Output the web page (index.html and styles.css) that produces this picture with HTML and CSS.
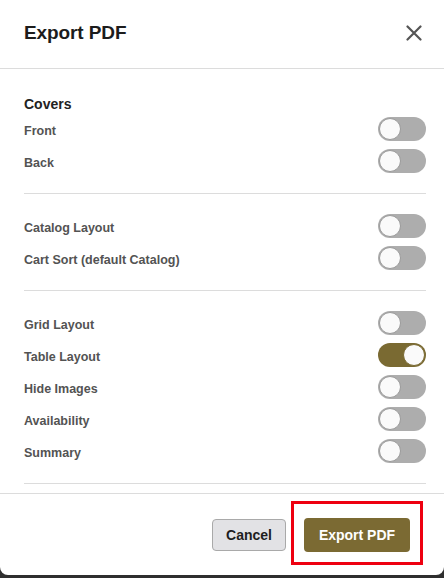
FILE: index.html
```html
<!DOCTYPE html>
<html lang="en">
<head>
<meta charset="utf-8">
<title>Export PDF</title>
<link rel="stylesheet" href="styles.css">
</head>
<body>
<div class="modal">
  <header class="modal-header">
    <h1 class="modal-title">Export PDF</h1>
    <button class="close-btn" aria-label="Close">
      <svg width="16" height="16" viewBox="0 0 16 16"><path d="M1.5 1.5 L14.5 14.5 M14.5 1.5 L1.5 14.5" stroke="#555" stroke-width="2.2" stroke-linecap="round" fill="none"/></svg>
    </button>
  </header>
  <div class="modal-body">
    <section class="section">
      <h2 class="section-title">Covers</h2>
      <div class="row"><span class="label">Front</span><span class="toggle"><span class="knob"></span></span></div>
      <div class="row"><span class="label">Back</span><span class="toggle"><span class="knob"></span></span></div>
    </section>
    <section class="section">
      <div class="row"><span class="label">Catalog Layout</span><span class="toggle"><span class="knob"></span></span></div>
      <div class="row"><span class="label">Cart Sort (default Catalog)</span><span class="toggle"><span class="knob"></span></span></div>
    </section>
    <section class="section">
      <div class="row"><span class="label">Grid Layout</span><span class="toggle"><span class="knob"></span></span></div>
      <div class="row"><span class="label">Table Layout</span><span class="toggle on"><span class="knob"></span></span></div>
      <div class="row"><span class="label">Hide Images</span><span class="toggle"><span class="knob"></span></span></div>
      <div class="row"><span class="label">Availability</span><span class="toggle"><span class="knob"></span></span></div>
      <div class="row"><span class="label">Summary</span><span class="toggle"><span class="knob"></span></span></div>
    </section>
  </div>
  <footer class="modal-footer">
    <button class="btn btn-cancel">Cancel</button>
    <button class="btn btn-primary">Export PDF</button>
    <span class="highlight"></span>
  </footer>
</div>
</body>
</html>
```
FILE: styles.css
```css
* { box-sizing: border-box; }
html, body { margin: 0; padding: 0; }
body {
  background: #2f2f2f;
  font-family: "Liberation Sans", Arial, sans-serif;
  width: 444px;
  height: 578px;
  overflow: hidden;
}
.modal {
  background: #fff;
  height: 575px;
  border-radius: 0 0 8px 8px;
  display: flex;
  flex-direction: column;
}
.modal-header {
  height: 69px;
  border-bottom: 1px solid #dcdcdc;
  display: flex;
  align-items: center;
  justify-content: space-between;
  padding: 0 22px 2px 24px;
}
.modal-title {
  margin: 0;
  font-size: 19px;
  font-weight: bold;
  color: #1c1c1c;
  letter-spacing: -0.1px;
}
.close-btn {
  background: none;
  border: 0;
  padding: 0;
  width: 16px;
  height: 16px;
  display: flex;
}
.modal-body {
  padding: 9px 18px 9px 24px;
}
.section {
  padding: 16px 0;
  border-bottom: 1px solid #dcdcdc;
}
.section:first-child {
  padding-top: 15px;
}
.section-title {
  margin: 0;
  height: 20px;
  line-height: 20px;
  padding-top: 1px;
  font-size: 14px;
  font-weight: bold;
  color: #222;
}
.row {
  height: 32px;
  display: flex;
  align-items: center;
  justify-content: space-between;
}
.label {
  font-size: 12.5px;
  font-weight: bold;
  color: #535353;
  padding-top: 3px;
}
.toggle {
  width: 48px;
  height: 24px;
  border-radius: 12px;
  background: #adadad;
  display: flex;
  align-items: center;
  padding: 0 1px;
}
.knob {
  width: 22px;
  height: 22px;
  border-radius: 50%;
  background: #fafafa;
  border: 1px solid #9a9a9a;
}
.toggle.on {
  background: #7a6a32;
  justify-content: flex-end;
}
.toggle.on .knob {
  border-color: #7a6a32;
}
.modal-footer {
  flex: 1;
  border-top: 1px solid #dcdcdc;
  display: flex;
  align-items: center;
  justify-content: flex-end;
  gap: 18px;
  padding: 0 34px 0 0;
  position: relative;
}
.btn {
  font-family: "Liberation Sans", Arial, sans-serif;
  font-size: 14px;
  font-weight: bold;
  border-radius: 4px;
  cursor: pointer;
}
.btn-cancel {
  width: 74px;
  height: 32px;
  background: #e2e2e5;
  border: 1px solid #a9a9a9;
  color: #1e1e1e;
}
.btn-primary {
  width: 106px;
  height: 34px;
  background: #7b6a33;
  border: 0;
  color: #fff;
}
.highlight {
  position: absolute;
  left: 291px;
  top: 7px;
  width: 132px;
  height: 64px;
  border: 3px solid #ee0010;
  pointer-events: none;
}
```
